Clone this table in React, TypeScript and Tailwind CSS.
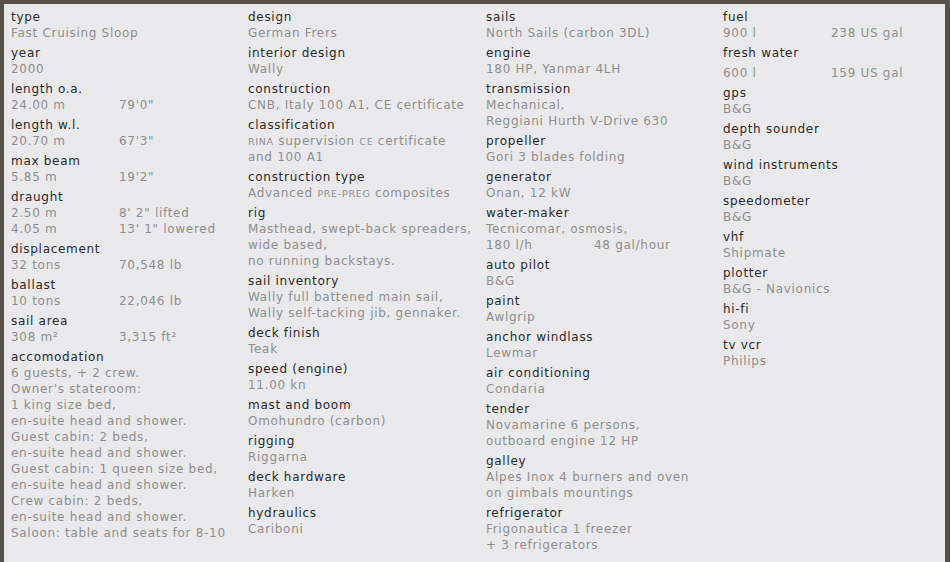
import type { ReactNode } from "react";

type Line = ReactNode | [ReactNode, ReactNode];

type Spec = {
  label: string;
  lines: Line[];
  extraTop?: boolean;
};

const sc = (t: string) => <span className="text-[9.5px] leading-none uppercase">{t}</span>;

const col1: Spec[] = [
  { label: "type", lines: ["Fast Cruising Sloop"] },
  { label: "year", lines: ["2000"] },
  { label: "length o.a.", lines: [["24.00 m", "79'0\""]] },
  { label: "length w.l.", lines: [["20.70 m", "67'3\""]] },
  { label: "max beam", lines: [["5.85 m", "19'2\""]] },
  {
    label: "draught",
    lines: [
      ["2.50 m", "8' 2\" lifted"],
      ["4.05 m", "13' 1\" lowered"]
    ]
  },
  { label: "displacement", lines: [["32 tons", "70,548 lb"]] },
  { label: "ballast", lines: [["10 tons", "22,046 lb"]] },
  { label: "sail area", lines: [["308 m²", "3,315 ft²"]] },
  {
    label: "accomodation",
    lines: [
      "6 guests, + 2 crew.",
      "Owner's stateroom:",
      "1 king size bed,",
      "en-suite head and shower.",
      "Guest cabin: 2 beds,",
      "en-suite head and shower.",
      "Guest cabin: 1 queen size bed,",
      "en-suite head and shower.",
      "Crew cabin: 2 beds,",
      "en-suite head and shower.",
      "Saloon: table and seats for 8-10"
    ]
  }
];

const col2: Spec[] = [
  { label: "design", lines: ["German Frers"] },
  { label: "interior design", lines: ["Wally"] },
  { label: "construction", lines: ["CNB, Italy 100 A1, CE certificate"] },
  {
    label: "classification",
    lines: [
      <>
        {sc("rina")} supervision {sc("ce")} certificate
      </>,
      "and 100 A1"
    ]
  },
  {
    label: "construction type",
    lines: [
      <>
        Advanced {sc("pre-preg")} composites
      </>
    ]
  },
  {
    label: "rig",
    lines: [
      "Masthead, swept-back spreaders,",
      "wide based,",
      "no running backstays."
    ]
  },
  {
    label: "sail inventory",
    lines: [
      "Wally full battened main sail,",
      "Wally self-tacking jib, gennaker."
    ]
  },
  { label: "deck finish", lines: ["Teak"] },
  { label: "speed (engine)", lines: ["11.00 kn"] },
  { label: "mast and boom", lines: ["Omohundro (carbon)"] },
  { label: "rigging", lines: ["Riggarna"] },
  { label: "deck hardware", lines: ["Harken"] },
  { label: "hydraulics", lines: ["Cariboni"] }
];

const col3: Spec[] = [
  { label: "sails", lines: ["North Sails (carbon 3DL)"] },
  { label: "engine", lines: ["180 HP, Yanmar 4LH"] },
  {
    label: "transmission",
    lines: ["Mechanical,", "Reggiani Hurth V-Drive 630"]
  },
  { label: "propeller", lines: ["Gori 3 blades folding"] },
  { label: "generator", lines: ["Onan, 12 kW"] },
  {
    label: "water-maker",
    lines: ["Tecnicomar, osmosis,", ["180 l/h", "48 gal/hour"]]
  },
  { label: "auto pilot", lines: ["B&G"] },
  { label: "paint", lines: ["Awlgrip"] },
  { label: "anchor windlass", lines: ["Lewmar"] },
  { label: "air conditioning", lines: ["Condaria"] },
  {
    label: "tender",
    lines: ["Novamarine 6 persons,", "outboard engine 12 HP"]
  },
  {
    label: "galley",
    lines: ["Alpes Inox 4 burners and oven", "on gimbals mountings"]
  },
  {
    label: "refrigerator",
    lines: ["Frigonautica 1 freezer", "+ 3 refrigerators"]
  }
];

const col4: Spec[] = [
  { label: "fuel", lines: [["900 l", "238 US gal"]] },
  { label: "fresh water", lines: [["600 l", "159 US gal"]], extraTop: true },
  { label: "gps", lines: ["B&G"] },
  { label: "depth sounder", lines: ["B&G"] },
  { label: "wind instruments", lines: ["B&G"] },
  { label: "speedometer", lines: ["B&G"] },
  { label: "vhf", lines: ["Shipmate"] },
  { label: "plotter", lines: ["B&G - Navionics"] },
  { label: "hi-fi", lines: ["Sony"] },
  { label: "tv vcr", lines: ["Philips"] }
];

function SpecItem({ spec }: { spec: Spec }) {
  return (
    <div className="mb-1">
      <div className="h-4 text-[#2b2b2b]">{spec.label}</div>
      <div className={spec.extraTop ? "pt-1 text-[#8f8f8f]" : "text-[#8f8f8f]"}>
        {spec.lines.map((line, i) =>
          Array.isArray(line) ? (
            <div key={i} className="flex h-4">
              <span className="w-[108px] shrink-0">{line[0]}</span>
              <span>{line[1]}</span>
            </div>
          ) : (
            <div key={i} className="h-4 whitespace-nowrap">
              {line}
            </div>
          )
        )}
      </div>
    </div>
  );
}

export default function App() {
  const columns = [col1, col2, col3, col4];
  return (
    <div className="h-[562px] w-[950px] overflow-hidden bg-[#56514a] pl-1 pr-[5px] pt-1">
      <div
        className="grid h-full grid-cols-[237px_238px_237px_1fr] bg-[#e9e9eb] pl-[7px] pt-[5px] text-[12px] leading-4 tracking-[0.7px]"
        style={{ fontFamily: '"DejaVu Sans", sans-serif' }}
      >
        {columns.map((col, i) => (
          <div key={i}>
            {col.map((spec) => (
              <SpecItem key={spec.label} spec={spec} />
            ))}
          </div>
        ))}
      </div>
    </div>
  );
}
